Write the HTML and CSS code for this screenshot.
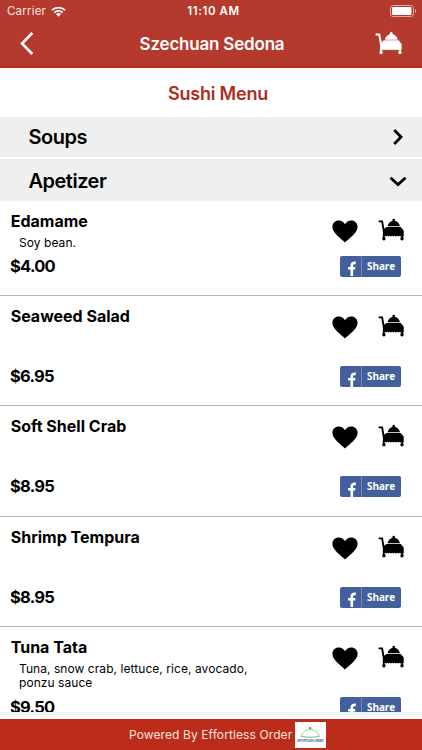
FILE: index.html
```
<!DOCTYPE html>
<html lang="en">
<head>
<meta charset="utf-8">
<title>Szechuan Sedona</title>
<link rel="stylesheet" href="styles.css">
</head>
<body>
<svg class="defs" width="0" height="0" aria-hidden="true">
  <symbol id="cart" viewBox="0 0 27 24">
    <path d="M.6 3.4h3.5L5.800 13v7.500M24.200 17v3.5" fill="none" stroke="currentColor" stroke-width="1.9"/>
    <path d="M9.500 8.300C10.2 5.3 12.3 3.4 14.6 2.800a1.3 1.3 0 1 1 2.2 0C19.3 3.4 21.3 5.3 22 8.300z" fill="currentColor"/>
    <path d="M8.500 8.900h14.300l2.9 3.500v5.400l-1 .8-1-.8-1.2.8-1.2-.8-1.2.8-1.2-.8-1.2.8-1.2-.8-1.2.8-1.2-.8-1.2.8-1.2-.8-1.2.8-1.2-.8-1.2.8-1.2-.8-1.300.6-.400-.6V11.500z" fill="currentColor"/>
    <circle cx="5.9" cy="20.700" r="1.7" fill="currentColor"/><circle cx="24" cy="20.700" r="1.7" fill="currentColor"/>
  </symbol>
  <symbol id="heart" viewBox="0 0 26 23">
    <path d="M13 22.5C9.5 18.7 .4 13.2.4 6.7.4 3 3.2.4 6.7.4 9.5.4 11.8 1.8 13 4.3 14.2 1.8 16.5.4 19.3.4c3.5 0 6.3 2.6 6.3 6.3 0 6.5-9.1 12-12.6 15.8z" fill="currentColor"/>
  </symbol>
  <symbol id="fb" viewBox="0 0 12 15">
    <path d="M5.8 15V6M2 7.300h7.300M5.800 9V4.500C5.800 2.500 6.800 1.700 9.800 1.900" fill="none" stroke="#fff" stroke-width="2.600"/>
  </symbol>
</svg>
<header class="top">
  <div class="status">
    <span class="carrier">Carrier</span>
    <svg class="wifi" viewBox="0 0 15 11"><path d="M1 4.2a9.3 9.3 0 0 1 13 0M3.3 6.6a6 6 0 0 1 8.4 0" fill="none" stroke="#fff" stroke-width="1.8"/><path d="M4.9 8.1a3.8 3.8 0 0 1 5.2 0L7.5 10.8z" fill="#fff"/></svg>
    <span class="clock">11:10 AM</span>
    <svg class="battery" viewBox="0 0 27 12"><rect x=".5" y=".5" width="23" height="11" rx="2.6" fill="none" stroke="#e0a69f"/><rect x="2" y="2" width="19.5" height="8" rx="1" fill="#fff"/><path d="M25 4v4c1.6-.5 1.6-3.5 0-4z" fill="#e0a69f"/></svg>
  </div>
  <div class="nav">
    <svg class="back" viewBox="0 0 14 23"><path d="M12.3 1L2 11.5 12.3 22" fill="none" stroke="#fff" stroke-width="2.6"/></svg>
    <h1 class="brand">Szechuan Sedona</h1>
    <svg class="cart"><use href="#cart"/></svg>
  </div>
</header>
<h2 class="menu-title"><span>Sushi Menu</span></h2>
<main class="list">
  <div class="section"><span>Soups</span><svg class="chev" viewBox="0 0 18 18"><path d="M5.2 2l6.8 7-6.8 7" fill="none" stroke="#000" stroke-width="2.8"/></svg></div>
  <div class="section"><span>Apetizer</span><svg class="chev" viewBox="0 0 18 18"><path d="M1.5 5.8L9 12.5l7.5-6.7" fill="none" stroke="#000" stroke-width="2.8"/></svg></div>
  <article class="item short">
    <div class="info"><h3>Edamame</h3><p class="desc">Soy bean.</p><p class="price">$4.00</p></div>
    <div class="actions"><svg class="heart"><use href="#heart"/></svg><svg class="cart"><use href="#cart"/></svg><div class="share"><svg class="fb"><use href="#fb"/></svg><span>Share</span></div></div>
  </article>
  <article class="item">
    <div class="info"><h3>Seaweed Salad</h3><p class="price">$6.95</p></div>
    <div class="actions"><svg class="heart"><use href="#heart"/></svg><svg class="cart"><use href="#cart"/></svg><div class="share"><svg class="fb"><use href="#fb"/></svg><span>Share</span></div></div>
  </article>
  <article class="item">
    <div class="info"><h3>Soft Shell Crab</h3><p class="price">$8.95</p></div>
    <div class="actions"><svg class="heart"><use href="#heart"/></svg><svg class="cart"><use href="#cart"/></svg><div class="share"><svg class="fb"><use href="#fb"/></svg><span>Share</span></div></div>
  </article>
  <article class="item">
    <div class="info"><h3>Shrimp Tempura</h3><p class="price">$8.95</p></div>
    <div class="actions"><svg class="heart"><use href="#heart"/></svg><svg class="cart"><use href="#cart"/></svg><div class="share"><svg class="fb"><use href="#fb"/></svg><span>Share</span></div></div>
  </article>
  <article class="item">
    <div class="info"><h3>Tuna Tata</h3><p class="desc">Tuna, snow crab, lettuce, rice, avocado,<br>ponzu sauce</p><p class="price">$9.50</p></div>
    <div class="actions"><svg class="heart"><use href="#heart"/></svg><svg class="cart"><use href="#cart"/></svg><div class="share"><svg class="fb"><use href="#fb"/></svg><span>Share</span></div></div>
  </article>
</main>
<div class="strip"></div>
<footer class="foot">
  <span>Powered By Effortless Order</span>
  <svg class="logo" viewBox="0 0 31 26"><path d="M0 0h31v26H0z" fill="#fff"/><path d="M6.5 14.2C7.5 9.8 11 7.5 15.2 7.5S23 9.8 24 14.2" fill="none" stroke="#75ca75" stroke-width=".8"/><path d="M6 14.2c4 1.3 14.5 1.3 18.5 0" fill="none" stroke="#49a856" stroke-width=".8"/><circle cx="15.2" cy="6.2" r="1.1" fill="#25a534"/><text x="2.3" y="20" class="logo-text" textLength="26">EFFORTLESS ORDER</text></svg>
</footer>
</body>
</html>
```
FILE: styles.css
```
* { box-sizing: border-box; margin: 0; padding: 0; }
body { width: 422px; height: 750px; overflow: hidden; display: flex; flex-direction: column; background: #fff; color: #000; font-family: Inter, "Liberation Sans", sans-serif; }
svg { display: block; flex: none; }
.defs { position: absolute; }
.top { height: 68px; flex: none; background: #b33a2d; border-bottom: 2px solid #bb2b18; color: #fff; }
.status { height: 22px; display: grid; grid-template-columns: 44px 1fr auto 1fr 27px; align-items: center; padding: 0 5px 0 7px; font-size: 11.5px; }
.carrier { grid-column: 1; letter-spacing: .2px; color: #f8e5e2; }
.wifi { width: 15px; height: 11px; }
.clock { font-weight: 600; font-size: 11.5px; letter-spacing: .6px; margin-right: 14px; }
.battery { grid-column: 5; width: 27px; height: 12px; }
.nav { height: 44px; display: grid; grid-template-columns: 30px 1fr 30px; align-items: center; padding: 0 18px 1px 20px; }
.nav .back { width: 14px; height: 23px; }
.brand { font-size: 17px; font-weight: 600; text-align: center; letter-spacing: -.2px; }
.nav .cart { width: 28px; height: 25px; margin-left: 1px; }
.menu-title { height: 49px; flex: none; display: flex; align-items: center; justify-content: center; padding: 1px 0 0 14px; color: #ae2c20; font-size: 18px; font-weight: 600; letter-spacing: -.2px; }
.list { height: 595px; flex: none; overflow: hidden; }
.section { height: 40px; margin-bottom: 2px; padding: 0 15px 0 28.5px; background: #efefef; display: flex; justify-content: space-between; align-items: center; font-size: 20px; font-weight: 600; letter-spacing: -.5px; }
.section + .section { height: 42px; margin-bottom: 0; padding-top: 1px; }
.chev { width: 18px; height: 18px; }
.item { height: 110.4px; border-bottom: 1px solid #b5b5b5; display: flex; justify-content: space-between; padding: 10px 17px 0 10px; }
.item.short { height: 95px; }
.info { height: 80px; display: flex; flex-direction: column; }
.item.short .info { height: 65px; }
h3 { padding-left: .7px; font-size: 16px; line-height: 21px; font-weight: 700; }
.desc { padding: 4px 0 0 9px; font-size: 12px; line-height: 14px; letter-spacing: .06px; }
.price { margin-top: auto; font-size: 16.5px; line-height: 20px; font-weight: 700; letter-spacing: -.75px; }
.actions { width: 76px; height: 81px; display: grid; grid-template-columns: 1fr 27px; grid-template-rows: 24px 21px; align-content: space-between; padding-top: 8px; }
.item.short .actions { height: 65.5px; padding-top: 7px; }
.heart { width: 26px; height: 23px; margin: 2px 0 0 3px; }
.actions .cart { width: 27px; height: 24px; }
.share { grid-column: 1 / 3; width: 61px; height: 21px; margin-left: 11px; border-radius: 2px; background: #43609c; color: #fff; display: flex; align-items: center; }
.fb { width: 12px; height: 15px; margin: 5px 0 0 6px; }
.share span { height: 21px; border-left: 1px solid #7188b8; margin-left: 3px; padding-left: 5px; font: 700 10px/21px "Open Sans", sans-serif; letter-spacing: -.1px; }
.strip { height: 7px; flex: none; border-bottom: 4px solid #fff; background: #f4f4f4; }
.foot { height: 31px; flex: none; background: #bb2c1b; color: #fae3df; display: flex; align-items: center; gap: 3px; padding-left: 129px; font-size: 12px; letter-spacing: .1px; }
.logo { width: 31px; height: 26px; }
.logo-text { font: 700 2.6px "Liberation Sans", sans-serif; fill: #4656a5; letter-spacing: 0; }
```
